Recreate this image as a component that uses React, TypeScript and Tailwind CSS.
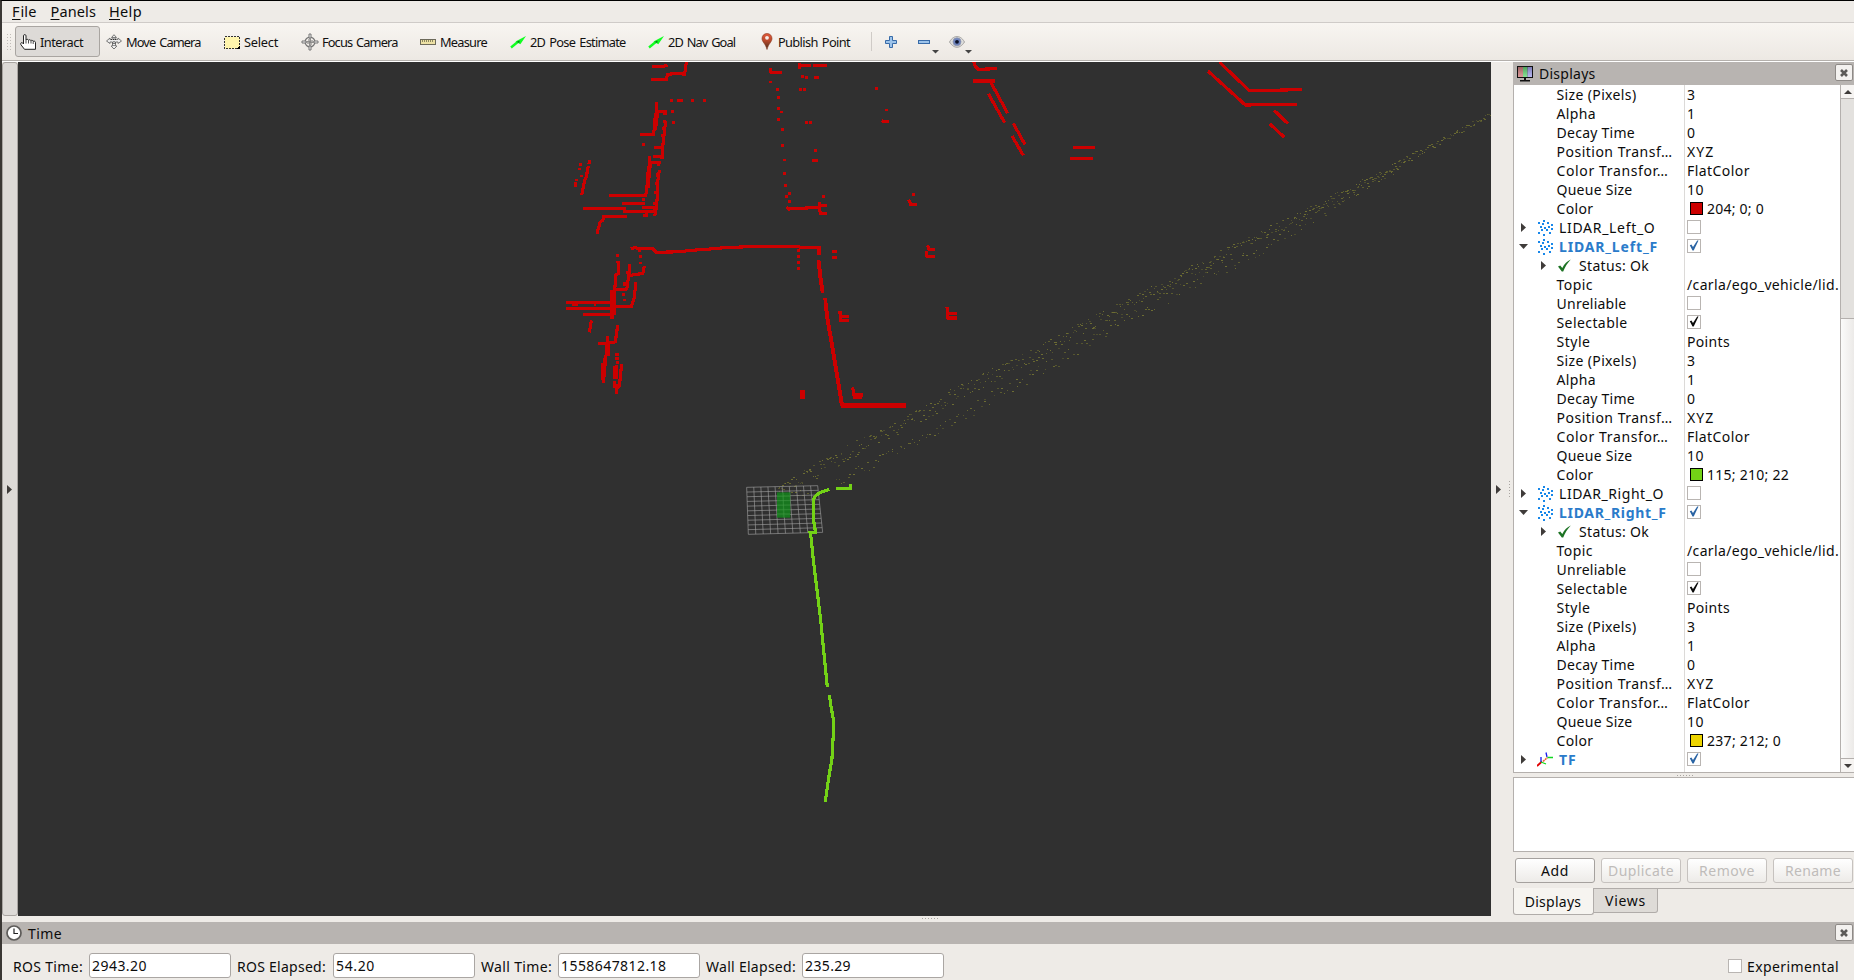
import { useLayoutEffect, useRef, type ReactNode } from "react";

/** Text run tracked so that it occupies exactly `w` pixels. */
function Fit({ w, children, className = "" }: { w: number; children: string; className?: string }) {
  const ref = useRef<HTMLSpanElement>(null);
  useLayoutEffect(() => {
    const el = ref.current;
    if (!el) return;
    el.style.letterSpacing = "0px";
    const natural = el.getBoundingClientRect().width;
    el.style.letterSpacing = (w - natural) / children.length + "px";
  }, [w, children]);
  return (
    <span ref={ref} className={"inline-block whitespace-pre " + className}>
      {children}
    </span>
  );
}

/* ---------- small icons ---------- */

function HandIcon() {
  return (
    <svg width="16" height="16" viewBox="0 0 16 16">
      <path d="M3.500 10V1.800C3.500.2 6 .2 6 1.800V6c.4-1 2.200-1 2.400.3C9 5.400 10.700 5.600 10.900 6.700c.7-.7 2.100-.4 2.200.6 1.200-.5 2.400.1 2.400 1.200V15.300H4.500L.9 10.700c-.6-2 .9-2.600 1.700-1.800z" fill="#fff" stroke="#222" strokeWidth="1" />
      <path d="M6 6v3.500M8.500 6.500v3M11 7v2.500M13.200 7.500v2.500" stroke="#222" strokeWidth=".8" />
    </svg>
  );
}

function MoveIcon() {
  return (
    <svg width="16" height="16" viewBox="0 0 16 16" fill="#eee" stroke="#777" strokeWidth="1">
      <path d="M8 .7 10.500 3.500H9V5l3 .5V4l3.500 3L12 9.500V8H9.500v4H11l-3 3-3-3H6.500V8H4v1.500L.5 7 4 4v1.500L7 5V3.500H5.500z" />
      <path d="M5 5.500h6M6.500 9h3M8 3v10" stroke="#333" strokeDasharray="1 1" />
    </svg>
  );
}

function SelectIcon() {
  return (
    <svg width="16" height="14" viewBox="0 0 16 14" shapeRendering="crispEdges">
      <rect x=".5" y="1.500" width="15" height="12" fill="#fff5ad" stroke="#333" strokeDasharray="2 1" />
      <path d="M16 10v4h-4z" fill="#000" />
    </svg>
  );
}

function FocusIcon() {
  return (
    <svg width="18" height="18" viewBox="0 0 18 18" fill="none">
      <circle cx="9" cy="9" r="4.800" stroke="#777" strokeWidth="1.400" />
      <path d="M9 5v8M5 9h8" stroke="#666" />
      <path d="M8 1h2v4H8zM8 13h2v4H8zM1 8h4v2H1zM13 8h4v2h-4z" stroke="#777" fill="#eee" />
      <path d="M7 7h4v4H7z" stroke="#777" strokeDasharray="1 1" />
    </svg>
  );
}

function MeasureIcon() {
  return (
    <svg width="16" height="6" viewBox="0 0 16 6" shapeRendering="crispEdges">
      <rect x=".5" y=".5" width="15" height="5" fill="#ede1a5" stroke="#6d6a5a" />
      <path d="M2.500 1v2M4.500 1v2M6.500 1v2M8.500 1v2M10.500 1v2M12.500 1v2" stroke="#8c875f" />
    </svg>
  );
}

function ArrowIcon() {
  return (
    <svg width="17" height="14" viewBox="0 0 17 14">
      <path d="M1 12.500 8 6.800" stroke="#1f2" strokeWidth="2.400" />
      <path d="M5.500 6.500 16 1 10.300 9.300z" fill="#1f2" />
      <path d="M6.500 7 9.500 5.500 9.300 8z" fill="#087d18" />
    </svg>
  );
}

function PinIcon() {
  return (
    <svg width="12" height="17" viewBox="0 0 12 17">
      <defs>
        <linearGradient id="pin" x1="0" y1="0" x2="0" y2="1">
          <stop offset="0" stopColor="#e25a3c" />
          <stop offset=".45" stopColor="#b8482b" />
          <stop offset="1" stopColor="#3f2e1c" />
        </linearGradient>
      </defs>
      <path d="M6 .5c3 0 5 2.200 5 5 0 3.500-3.500 5-5 11-1.500-6-5-7.500-5-11 0-2.800 2-5 5-5z" fill="url(#pin)" stroke="#8c3a24" strokeWidth=".6" />
      <circle cx="6" cy="4.800" r="1.900" fill="#f6ece8" />
    </svg>
  );
}

function PlusIcon() {
  return (
    <svg width="12" height="12" viewBox="0 0 12 12">
      <path d="M4.500.5h3v4h4v3h-4v4h-3v-4h-4v-3h4z" fill="#9cc3ea" stroke="#386ba8" />
    </svg>
  );
}

function MinusIcon() {
  return (
    <svg width="12" height="4" viewBox="0 0 12 4">
      <rect x=".5" y=".5" width="11" height="3" fill="#9cc3ea" stroke="#386ba8" />
    </svg>
  );
}

function EyeIcon() {
  return (
    <svg width="16" height="12" viewBox="0 0 16 12" className="shrink-0">
      <path d="M.5 6C3 1.500 6 .5 8 .5s5 1 7.500 5.500C13 10 10 11.300 8 11.300S3 10 .5 6z" fill="#dededc" stroke="#a3a19f" />
      <circle cx="8" cy="5.800" r="4" fill="#6d83bd" stroke="#8f95ad" strokeWidth=".8" />
      <circle cx="8" cy="5.800" r="1.900" fill="#0d1228" />
    </svg>
  );
}

function Caret({ dir }: { dir: "right" | "down" | "up" }) {
  const d = { right: "M0 0 5 4.500 0 9z", down: "M0 0H9L4.500 5z", up: "M0 4H8L4 0z" }[dir];
  return (
    <svg width={dir === "right" ? 5 : 9} height={dir === "right" ? 9 : 5} className="block">
      <path d={d} fill="#3f3c3a" />
    </svg>
  );
}

function CloudIcon() {
  const pts = [[5, 0], [0, 2], [9, 2], [4, 3], [13, 4], [2, 6], [6, 7], [10, 6], [13, 8], [3, 9], [8, 9], [0, 12], [11, 12], [5, 14]];
  return (
    <svg width="16" height="16" viewBox="0 0 16 16" shapeRendering="crispEdges">
      {pts.map(([x, y]) => (
        <rect key={x + "-" + y} x={x} y={y} width="2" height="2" fill="#1787ea" />
      ))}
    </svg>
  );
}

function AxesIcon() {
  return (
    <svg width="16" height="15" viewBox="0 0 16 15" fill="none" strokeWidth="1.300">
      <path d="M0 14 5 9.500" stroke="#e00000" strokeWidth="1.800" />
      <path d="M6 9.500 10.500 5.500" stroke="#f0602a" strokeDasharray="2 .6" strokeWidth="1.600" />
      <path d="M4 10V5M10 5 9 .5" stroke="#1818f0" />
      <path d="M4 10l5 2M10.500 5.500H16" stroke="#10d820" />
    </svg>
  );
}

function OkIcon() {
  return (
    <svg width="13" height="13" viewBox="0 0 13 13">
      <path d="M0 7.500 2.200 6.500 4.300 9C6.500 4.500 9 2 12.800.4 9.500 4 7 7.500 5.200 12.600H3.800z" fill="#1d7324" />
    </svg>
  );
}

function MonitorIcon() {
  return (
    <svg width="16" height="16" viewBox="0 0 16 16">
      <defs>
        <linearGradient id="scr" x1="0" y1="0" x2="0" y2="1">
          <stop offset="0" stopColor="#000" stopOpacity=".25" />
          <stop offset="1" stopColor="#fff" stopOpacity=".2" />
        </linearGradient>
      </defs>
      <rect x="0" y="0" width="16" height="12" fill="#111" />
      <rect x="1" y="1" width="5" height="10" fill="#d08080" />
      <rect x="6" y="1" width="4.500" height="10" fill="#68d878" />
      <rect x="10.500" y="1" width="4.500" height="10" fill="#a4a4ee" />
      <rect x="1" y="1" width="14" height="10" fill="url(#scr)" />
      <path d="M7 12h2v2h4v1.500H3V14h4z" fill="#111" />
    </svg>
  );
}

function ClockIcon() {
  return (
    <svg width="16" height="16" viewBox="0 0 16 16" fill="none">
      <circle cx="8" cy="8" r="7" fill="#fff" stroke="#5d5b59" strokeWidth="1.700" />
      <path d="M8 3.500V8.500H12" stroke="#222" strokeWidth="1.200" />
    </svg>
  );
}

function CloseButton() {
  return (
    <div className="flex h-[17px] w-[18px] items-center justify-center rounded-[2px] border border-[#8e8a87] bg-[#f3f1ef]">
      <svg width="8" height="8" viewBox="0 0 8 8">
        <path d="M1 1 7 7M7 1 1 7" stroke="#5c5a58" strokeWidth="2.600" />
      </svg>
    </div>
  );
}

function Check({ on, blue }: { on: boolean; blue?: boolean }) {
  return (
    <div className="flex size-[14px] items-center justify-center border border-[#b9b5b2] bg-white">
      {on && (
        <svg width="10" height="11" viewBox="0 0 10 11">
          <path d="M.8 5.200 2.400 4.400 4 7 8.200.4H9.500L4.700 10.400H3.500z" fill={blue ? "#2a64a4" : "#0a0a0a"} />
        </svg>
      )}
    </div>
  );
}

/* ---------- 3D viewport ---------- */

function makeRandom(seed: number) {
  let s = seed;
  return () => {
    s = (s * 1664525 + 1013904223) % 4294967296;
    return s / 4294967296;
  };
}

type Dot = { x: number; y: number; w: number; c: string };

function scatter(path: number[][], spacing: number, seed: number): Dot[] {
  const rnd = makeRandom(seed);
  const shades = ["#66662f", "#5c5c2f", "#4b4b2f", "#6c6c33", "#55552f"];
  const dots: Dot[] = [];
  for (let i = 0; i < path.length - 1; i++) {
    const [x0, y0, h0] = path[i];
    const [x1, y1, h1] = path[i + 1];
    const n = Math.round((x1 - x0) / spacing);
    for (let k = 0; k < n; k++) {
      const t = (k + rnd()) / n;
      const h = h0 + (h1 - h0) * t;
      dots.push({
        x: Math.round(x0 + (x1 - x0) * t),
        y: Math.round(y0 + (y1 - y0) * t + (rnd() * 2 - 1) * h),
        w: rnd() > 0.4 ? 2 : 1,
        c: shades[Math.floor(rnd() * shades.length)],
      });
    }
  }
  return dots;
}

const DOTS: Dot[] = [
  ...scatter([[778, 486, 2], [800, 478, 7], [828, 464, 8], [860, 446, 8], [933, 407, 8], [982, 380, 8], [1040, 352, 7], [1087, 325, 7], [1140, 298, 6], [1200, 266, 6], [1267, 232, 6], [1320, 206, 5], [1400, 163, 4], [1491, 113, 2]], 1.3, 7),
  ...scatter([[835, 483, 5], [900, 448, 6], [950, 423, 6], [1000, 391, 7], [1043, 368, 7], [1090, 340, 7], [1140, 311, 7], [1193, 283, 7], [1267, 245, 6], [1330, 207, 5], [1400, 167, 3]], 2.7, 21),
  ...scatter([[778, 489, 4], [810, 500, 14]], 3, 5),
];

const SPECKS_LEFT = [[365,121],[385,121],[394,121],[429,121],[465,121],[367,155],[370,187],[281,254],[91,313],[89,327],[95,348],[79,360],[76,370],[76,377],[280,419],[202,587],[270,571],[272,589],[273,609],[221,703],[223,720],[199,883],[203,883],[200,895],[204,895],[203,907],[193,967],[661,66],[682,88],[687,112],[686,145],[694,156],[685,178],[697,208],[699,256],[703,300],[705,340],[706,377],[718,400],[709,410],[718,424],[757,50],[771,53],[797,53],[804,53],[752,88],[763,88],[769,187],[782,187],[796,271],[790,301],[801,301],[979,85],[1009,150],[820,409],[747,571],[747,589],[747,607],[747,625],[850,575],[857,575],[850,593],[857,593],[1090,403]];

const RED_LEFT = [
  "M306 19H342L352 15", "M303 58H350L352 43 372 41 403 42 406 30 409 6",
  "M319 126 318 180", "M318 154H350", "M316 158 314 200 310 224H270", "M322 158 320 185 316 210", "M345 155V164",
  "M347 184 342 225 338 262 336 296", "M340 185H348M337 206H348M334 226H345", "M312 263H340M309 290H337",
  "M298 288 299 306 293 345 291 380 287 407H178", "M301 312 297 350 295 385", "M300 307H332M325 307V319",
  "M328 331 322 372 322 410 319 442 314 468", "M318 345H330M316 370H326M312 397H324M310 430H320",
  "M216 430H285", "M100 446H228", "M219 455H285", "M277 442H317M288 470 290 455 312 453M280 466H293",
  "M157 470H230", "M162 471 158 481 150 487 141 521",
  "M118 300 117 312", "M115 318 109 350 103 365 95 405",
  "M243 567 254 562 262 565H308L318 577 400 575 410 572 480 567 525 563 620 559 743 560 757 563 812 563",
  "M807 560V584", "M805 600 810 650 818 698", "M825 715 830 770 846 860 876 1036",
  "M661 25 663 37H695", "M748 10 750 28M750 17H783M789 16H832", "M995 181 1000 184H1016",
  "M709 441 715 447 808 442 808 425M808 436H832M808 442 811 460H830",
  "M204 603 206 640 198 645 194 690 187 725 185 776", "M186 690V776M192 690V765",
  "M239 612 237 640 230 690M228 637H238M230 655H236M220 673H232M224 667V678", "M237 647 258 643 278 641 283 618", "M195 689H232",
  "M48 728H185", "M48 745H185", "M98 763H185", "M66 732H85M132 732H138", "M180 740H244L252 715 258 667",
  "M124 781 118 817", "M203 796 196 845 185 848 172 849M144 851H172", "M172 829 174 870M172 850 166 905 160 970",
  "M176 850 175 888", "M159 910 157 960", "M163 895 161 955",
  "M194 918V957M200 916V957", "M215 912 211 950 208 978 199 985V1001M190 978H208",
  "M870 752 871 781H897M868 770H897", "M908 982 912 1005H940M910 1012H936",
  "M1076 419 1082 433H1101", "M1132 556 1137 568H1155M1128 574 1131 590H1155", "M1191 742 1194 774H1222M1194 761H1222",
];

const RED_RIGHT = [
  "M222 6 226 18 234 28 291 26", "M220 63H286", "M272 66 323 160", "M265 101 314 188", "M340 190 375 254", "M336 228 370 286",
  "M518 262H585", "M510 295H579", "M958 6 1048 92 1205 89", "M924 33 1036 135 1190 133", "M1122 151 1164 191", "M1109 191 1153 232",
];

function Viewport() {
  const grid: ReactNode[] = [];
  for (let i = 0; i <= 10; i++) {
    const t = i / 10;
    grid.push(
      <path key={"v" + i} d={`M${50 + 213 * t} ${262 - 5 * t} ${55 + 223 * t} ${403 - 6 * t}`} />,
      <path key={"h" + i} d={`M${50 + 5 * t} ${262 + 141 * t} ${263 + 15 * t} ${257 + 140 * t}`} />,
    );
  }
  return (
    <svg width="1473" height="854" viewBox="18 62 1473 854" className="block shrink-0 bg-[#303030]">
      <g shapeRendering="crispEdges">
        {DOTS.map((d, i) => (
          <rect key={i} x={d.x} y={d.y} width={d.w} height="1" fill={d.c} />
        ))}
      </g>
      <g transform="translate(730 400) scale(.33333)" fill="none">
        <g stroke="#a0a0a0" strokeOpacity=".62" strokeWidth="3">{grid}</g>
        <rect x="141" y="277" width="40" height="76" fill="#14861c" fillOpacity=".82" />
        <path d="M160 277V353M141 289H181M141 302H181M141 315H181M141 328H181M141 341H181" stroke="#4aa04c" strokeWidth="2" opacity=".5" />
        <g stroke="#73d216" strokeWidth="9.500" shapeRendering="crispEdges">
          <path d="M318 266H362V252" />
          <path d="M298 268 284 273 268 279 255 289 250 302V340L252 370 257 398H240L243 412 250 480 272 660 292 862" />
          <path d="M298 885 304 925 310 958V1000L306 1075 295 1140 286 1205" />
        </g>
      </g>
      <g stroke="#cc0000" strokeWidth="9.500" fill="none" shapeRendering="crispEdges">
        <g transform="translate(550 60) scale(.33333)">
          {RED_LEFT.map((d) => <path key={d} d={d} />)}
          <path d="M806 605 811 650 817 692M827 730 832 775 847 860 875 1030" strokeWidth="12" />
          <path d="M757 990V1018" strokeWidth="14" />
          <path d="M873 1036H1068" strokeWidth="14" />
          {SPECKS_LEFT.map(([x, y], i) => (
            <rect key={i} x={x - 5} y={y - 4} width="9" height="8" fill="#cc0000" stroke="none" />
          ))}
        </g>
        <g transform="translate(900 60) scale(.33333)">
          {RED_RIGHT.map((d) => <path key={d} d={d} />)}
        </g>
      </g>
    </svg>
  );
}

/* ---------- toolbar ---------- */

function MenuMark() {
  return (
    <svg width="7" height="4" className="shrink-0">
      <path d="M0 0H7L3.500 3.500z" fill="#444" />
    </svg>
  );
}

function Toolbar() {
  return (
    <div className="flex h-[39px] items-center border-b border-white bg-gradient-to-b from-[#f8f5f1] to-[#ece8e3] text-[12.8px] leading-[18px] text-[#111] [word-spacing:1.5px]">
      <div className="flex h-full w-full items-center border-b border-[#b4b0ac]">
        <div className="ml-[4px] h-[18px] w-[6px] bg-[radial-gradient(circle,#c0bcb8_0.7px,transparent_1px)] bg-[size:3px_3px]" />
        <div className="ml-[3px] flex h-[31px] w-[85px] shrink-0 items-center gap-[4px] rounded-[3px] border border-[#a9a5a1] bg-[#dddad7] pl-[4px]">
          <HandIcon />
          <Fit w={43}>Interact</Fit>
        </div>
        <div className="flex w-[118px] shrink-0 items-center gap-[4px] pl-[6px]"><MoveIcon /><Fit w={74.500}>Move Camera</Fit></div>
        <div className="flex w-[77px] shrink-0 items-center gap-[4px] pl-[6px]"><SelectIcon /><Fit w={34}>Select</Fit></div>
        <div className="flex w-[119px] shrink-0 items-center gap-[3px] pl-[6px]"><FocusIcon /><Fit w={75.500}>Focus Camera</Fit></div>
        <div className="flex w-[90px] shrink-0 items-center gap-[4px] pl-[6px]"><MeasureIcon /><Fit w={47}>Measure</Fit></div>
        <div className="flex w-[138px] shrink-0 items-center gap-[3px] pl-[6px]"><ArrowIcon /><Fit w={95.500}>2D Pose Estimate</Fit></div>
        <div className="flex w-[111px] shrink-0 items-center gap-[3px] pl-[6px]"><ArrowIcon /><Fit w={67}>2D Nav Goal</Fit></div>
        <div className="flex w-[118px] shrink-0 items-center gap-[5px] pl-[8px]"><PinIcon /><Fit w={72}>Publish Point</Fit></div>
        <div className="h-[19px] w-px shrink-0 bg-[#cfcbc7]" />
        <div className="ml-[13px]"><PlusIcon /></div>
        <div className="ml-[21px]"><MinusIcon /></div>
        <div className="ml-[2px] mt-[20px]"><MenuMark /></div>
        <div className="ml-[10px]"><EyeIcon /></div>
        <div className="mt-[20px]"><MenuMark /></div>
      </div>
    </div>
  );
}

/* ---------- displays tree ---------- */

type Row =
  | { kind: "prop"; label: string; lw: number; value?: string; vw?: number; check?: boolean; color?: string }
  | { kind: "display"; label: string; lw: number; on: boolean; open?: boolean; tf?: boolean }
  | { kind: "status" };

const tail = (value: string, vw: number, color: string): Row[] => [
  { kind: "prop", label: "Size (Pixels)", lw: 80, value: "3", vw: 8.500 },
  { kind: "prop", label: "Alpha", lw: 39.500, value: "1", vw: 8.500 },
  { kind: "prop", label: "Decay Time", lw: 78.500, value: "0", vw: 8.500 },
  { kind: "prop", label: "Position Transf…", lw: 116, value: "XYZ", vw: 27.500 },
  { kind: "prop", label: "Color Transfor…", lw: 112, value: "FlatColor", vw: 63 },
  { kind: "prop", label: "Queue Size", lw: 76, value: "10", vw: 17 },
  { kind: "prop", label: "Color", lw: 37, value, vw, color },
];

const head: Row[] = [
  { kind: "status" },
  { kind: "prop", label: "Topic", lw: 36.500, value: "/carla/ego_vehicle/lid.", vw: 152 },
  { kind: "prop", label: "Unreliable", lw: 70, check: false },
  { kind: "prop", label: "Selectable", lw: 71, check: true },
  { kind: "prop", label: "Style", lw: 34, value: "Points", vw: 43 },
];

const ROWS: Row[] = [
  ...tail("204; 0; 0", 57, "bg-[#cc0000]"),
  { kind: "display", label: "LIDAR_Left_O", lw: 96.500, on: false },
  { kind: "display", label: "LIDAR_Left_F", lw: 99, on: true, open: true },
  ...head,
  ...tail("115; 210; 22", 82, "bg-[#73d216]"),
  { kind: "display", label: "LIDAR_Right_O", lw: 105, on: false },
  { kind: "display", label: "LIDAR_Right_F", lw: 107.500, on: true, open: true },
  ...head,
  ...tail("237; 212; 0", 74, "bg-[#edd400]"),
  { kind: "display", label: "TF", lw: 17.500, on: true, tf: true },
];

function TreeRow({ row }: { row: Row }) {
  let left: ReactNode;
  let right: ReactNode = null;
  if (row.kind === "prop") {
    left = <Fit w={row.lw} className="ml-[42.5px]">{row.label}</Fit>;
    if (row.check !== undefined) right = <div className="-mt-[2px] ml-[2px]"><Check on={row.check} /></div>;
    else
      right = (
        <div className="flex items-center">
          {row.color && <div className={"-mt-px ml-[5px] mr-[4px] size-[13px] border border-black " + row.color} />}
          <Fit w={row.vw ?? 0} className={row.color ? "" : "ml-[2px]"}>{row.value ?? ""}</Fit>
        </div>
      );
  } else if (row.kind === "status") {
    left = (
      <>
        <div className="ml-[27px] w-[17px]"><Caret dir="right" /></div>
        <OkIcon />
        <Fit w={70} className="ml-[8px]">Status: Ok</Fit>
      </>
    );
  } else {
    left = (
      <>
        <div className={row.open ? "ml-[5px] w-[19px]" : "ml-[7px] w-[17px]"}><Caret dir={row.open ? "down" : "right"} /></div>
        <div className={row.tf ? "-ml-px mr-px" : ""}>{row.tf ? <AxesIcon /> : <CloudIcon />}</div>
        <Fit w={row.lw} className={row.on ? "ml-[5px] font-bold text-[#2a7bca]" : "ml-[5px]"}>{row.label}</Fit>
      </>
    );
    right = <div className="-mt-[2px] ml-[2px]"><Check on={row.on} blue /></div>;
  }
  return (
    <div className="flex h-[19px]">
      <div className="flex w-[170px] shrink-0 items-center">{left}</div>
      <div className="flex w-[156px] items-center overflow-hidden border-l border-[#dcdad8]">{right}</div>
    </div>
  );
}

function Dots({ vertical }: { vertical?: boolean }) {
  return (
    <div className={vertical ? "flex flex-col gap-[2px]" : "flex gap-[2px]"}>
      {[0, 1, 2, 3, 4, 5].map((i) => <div key={i} className="size-px bg-[#a9a5a1]" />)}
    </div>
  );
}

function PanelButton({ w, children, disabled }: { w: number; children: string; disabled?: boolean }) {
  return (
    <div className={"flex h-[25px] w-[80px] shrink-0 items-center justify-center rounded-[3px] border bg-gradient-to-b from-white to-[#edebe8] " + (disabled ? "border-[#c6c2bf] text-[#bfbcba]" : "border-[#a5a19e]")}>
      <Fit w={w}>{children}</Fit>
    </div>
  );
}

function DisplaysPanel() {
  return (
    <div className="flex w-[341px] shrink-0 flex-col">
      <div className="flex h-[23px] items-center bg-[#b8b4b1]">
        <div className="ml-[4px]"><MonitorIcon /></div>
        <Fit w={56.500} className="ml-[6px]">Displays</Fit>
        <div className="mb-[2px] ml-auto mr-px"><CloseButton /></div>
      </div>
      <div className="flex h-[688px] border-b border-l border-[#b4b0ad] bg-white">
        <div className="flex w-[326px] flex-col">
          {ROWS.map((r, i) => <TreeRow key={i} row={r} />)}
          <div className="ml-[170px] flex-1 border-l border-[#dcdad8]" />
        </div>
        <div className="flex w-[14px] flex-col border-l border-[#b4b0ad]">
          <div className="flex h-[14px] items-center justify-center border-b border-[#b4b0ad] bg-[#f6f4f2]">
            <svg width="8" height="4"><path d="M0 4H8L4 0z" fill="#3f3c3a" /></svg>
          </div>
          <div className="h-[220px] border-b border-[#b4b0ad] bg-[#e3e1de]" />
          <div className="flex-1 bg-gradient-to-r from-[#fbfbfa] to-[#eceae8]" />
          <div className="flex h-[14px] items-center justify-center border-t border-[#b4b0ad] bg-[#f6f4f2]">
            <svg width="8" height="4"><path d="M0 0H8L4 4z" fill="#3f3c3a" /></svg>
          </div>
        </div>
      </div>
      <div className="flex h-[4px] items-center pl-[164px]"><Dots /></div>
      <div className="h-[75px] border-y border-l border-[#b4b0ad] bg-white" />
      <div className="flex h-[36px] items-start gap-[6px] pl-[2px] pt-[6px]">
        <PanelButton w={28}>Add</PanelButton>
        <PanelButton w={66} disabled>Duplicate</PanelButton>
        <PanelButton w={56} disabled>Remove</PanelButton>
        <PanelButton w={56} disabled>Rename</PanelButton>
      </div>
      <div className="flex items-start">
        <div className="flex h-[27px] w-[81px] items-center justify-center rounded-b-[3px] border border-t-0 border-[#b0aca9] bg-[#f6f4f0] pr-px"><Fit w={56.500}>Displays</Fit></div>
        <div className="flex h-[25px] w-[64px] items-center justify-center rounded-br-[3px] border border-l-0 border-[#b0aca9] bg-[#dedbd7]"><Fit w={41}>Views</Fit></div>
        <div className="h-px flex-1 bg-[#b0aca9]" />
      </div>
    </div>
  );
}

/* ---------- time panel ---------- */

function Field({ w, children }: { w: number; children: string }) {
  return (
    <div className="flex h-[25px] w-[142px] shrink-0 items-center rounded-[3px] border border-[#aaa6a3] bg-white pl-[2px]">
      <Fit w={w}>{children}</Fit>
    </div>
  );
}

function TimePanel() {
  return (
    <>
      <div className="flex h-[22px] shrink-0 items-center bg-[#b8b4b1]">
        <div className="ml-[4px]"><ClockIcon /></div>
        <Fit w={34} className="ml-[6px]">Time</Fit>
        <div className="mb-px ml-auto mr-px"><CloseButton /></div>
      </div>
      <div className="flex h-[36px] items-center pt-[7px]">
        <Fit w={70} className="ml-[11px] mr-[6px] mt-[2px]">ROS Time:</Fit>
        <Field w={55}>2943.20</Field>
        <Fit w={89} className="ml-[6px] mr-[7px] mt-[2px]">ROS Elapsed:</Fit>
        <Field w={39}>54.20</Field>
        <Fit w={71} className="ml-[6px] mr-[6px] mt-[2px]">Wall Time:</Fit>
        <Field w={105.500}>1558647812.18</Field>
        <Fit w={90} className="ml-[6px] mr-[6px] mt-[2px]">Wall Elapsed:</Fit>
        <Field w={46}>235.29</Field>
        <div className="ml-auto mr-[15px] flex items-center gap-[5px]">
          <Check on={false} />
          <Fit w={92} className="mt-[2px]">Experimental</Fit>
        </div>
      </div>
    </>
  );
}

export default function App() {
  return (
    <div className="flex h-[980px] w-[1854px] flex-col overflow-hidden border-l-2 border-t border-l-[#3a3734] border-t-black bg-[#eeebe7] font-['Noto_Sans','Open_Sans',sans-serif] text-[14px] leading-[19px] text-[#0c0c0c]">
      <div className="flex h-[22px] shrink-0 items-center border-b border-[#cfcbc8] text-[14.5px]">
        <div className="ml-[10px] flex"><Fit w={8.500} className="underline underline-offset-2">F</Fit><Fit w={16}>ile</Fit></div>
        <div className="ml-[14px] flex"><Fit w={9} className="underline underline-offset-2">P</Fit><Fit w={36.500}>anels</Fit></div>
        <div className="ml-[13px] flex"><Fit w={11} className="underline underline-offset-2">H</Fit><Fit w={22}>elp</Fit></div>
      </div>
      <Toolbar />
      <div className="flex h-[854px] shrink-0">
        <div className="flex w-[16px] shrink-0 items-center rounded-[3px] border border-[#a9a5a2] bg-[#dddad7] pl-[4px]"><Caret dir="right" /></div>
        <Viewport />
        <div className="flex w-[22px] shrink-0 items-center gap-[8px] pl-[5px]">
          <Caret dir="right" />
          <Dots vertical />
        </div>
        <DisplaysPanel />
      </div>
      <div className="flex h-[6px] shrink-0 items-start pl-[920px] pt-[2px]"><Dots /></div>
      <TimePanel />
    </div>
  );
}
